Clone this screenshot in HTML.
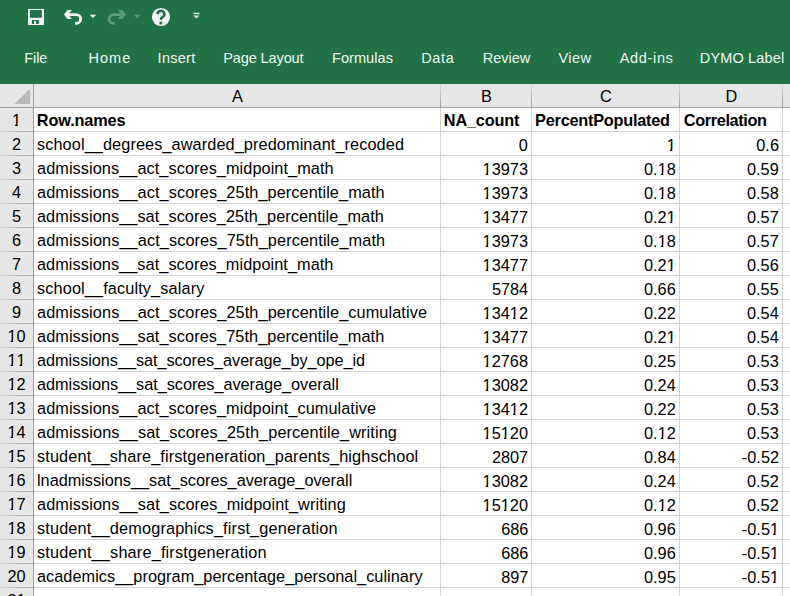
<!DOCTYPE html><html><head><meta charset="utf-8"><style>
*{margin:0;padding:0;box-sizing:border-box}
html,body{width:790px;height:596px;overflow:hidden;background:#fff}
body{position:relative;font-family:"Liberation Sans",sans-serif}
.a{position:absolute}
.t{position:absolute;white-space:nowrap;color:#000;font-size:16.3px;letter-spacing:0px;line-height:1}
.rt{transform-origin:100% 0}
.lt{transform-origin:0 0}
.o{display:inline-block;clip-path:polygon(0 0,100% 0,100% 72%,62% 72%,62% 100%,35% 100%,35% 72%,0 72%)}
.tab{position:absolute;white-space:nowrap;color:#f0f5f2;font-size:14.5px;line-height:1;transform-origin:0 0}
</style></head><body>

<div class="a" style="left:0;top:0;width:790px;height:84px;background:#217346"></div>
<svg class="a" style="left:0;top:0" width="220" height="36" viewBox="0 0 220 36">
<path d="M28 9h16v16h-16z M30 10h11.9v7.7h-11.9z M31.9 19.9h7v4h-2.8v-2.8h-2v2.8h-2.2z" fill="#f3f3f3" fill-rule="evenodd"/>
<path d="M68 14.65H76.3A4.35 4.35 0 0 1 76.3 23.35H75.1" fill="none" stroke="#f3f3f3" stroke-width="2.9"/>
<path d="M64 14.5L67.5 10H71.8L68.4 14.5L71.8 19H67.5Z" fill="#f3f3f3"/>
<path d="M89.7 14.8h6.4l-3.2 3.1z" fill="#f3f3f3"/>
<path d="M121.8 14.65H113.5A4.35 4.35 0 0 0 113.5 23.35H114.7" fill="none" stroke="#5c9d76" stroke-width="2.9"/>
<path d="M125.8 14.5L122.3 10H118L121.4 14.5L118 19H122.3Z" fill="#5c9d76"/>
<path d="M133.7 14.8h6.5l-3.25 3.1z" fill="#5c9d76"/>
<circle cx="161" cy="17" r="9.1" fill="#f3f3f3"/>
<path d="M157.6 14.2a3.4 3.2 0 1 1 5.2 2.6c-1.3.9-1.9 1.4-1.9 3" fill="none" stroke="#217346" stroke-width="2.6"/>
<rect x="159.5" y="21.6" width="2.8" height="2.8" fill="#217346"/>
<rect x="193.6" y="12.8" width="5.8" height="1.4" fill="#f3f3f3"/>
<path d="M193.5 15.4h6l-3 3.2z" fill="#f3f3f3"/>
</svg>
<div class="tab" style="left:24.2px;top:51px;letter-spacing:-0.067px">File</div>
<div class="tab" style="left:88.4px;top:51px;letter-spacing:1.067px">Home</div>
<div class="tab" style="left:157.6px;top:51px;letter-spacing:0.28px">Insert</div>
<div class="tab" style="left:223.2px;top:51px;letter-spacing:-0.1px">Page Layout</div>
<div class="tab" style="left:332.0px;top:51px;letter-spacing:0.071px">Formulas</div>
<div class="tab" style="left:421.2px;top:51px;letter-spacing:0.633px">Data</div>
<div class="tab" style="left:482.8px;top:51px;letter-spacing:-0.04px">Review</div>
<div class="tab" style="left:558.6px;top:51px;letter-spacing:0.367px">View</div>
<div class="tab" style="left:619.8px;top:51px;letter-spacing:0.65px">Add-ins</div>
<div class="tab" style="left:699.8px;top:51px;letter-spacing:0.144px">DYMO Label</div>
<div class="a" style="left:0;top:84px;width:790px;height:23px;background:#e6e6e6"></div>
<div class="a" style="left:0;top:107px;width:33px;height:489px;background:#e6e6e6"></div>
<div class="a" style="left:0;top:107px;width:790px;height:1px;background:#9f9f9f"></div>
<div class="a" style="left:33px;top:84px;width:1px;height:512px;background:#9f9f9f"></div>
<svg class="a" style="left:0;top:84px" width="33" height="23"><path d="M14.5 20h15.6v-15.4z" fill="#b9b9b9"/></svg>
<div class="a" style="left:440px;top:84px;width:1px;height:23px;background:linear-gradient(#dadada,#9f9f9f)"></div>
<div class="a" style="left:531px;top:84px;width:1px;height:23px;background:linear-gradient(#dadada,#9f9f9f)"></div>
<div class="a" style="left:679px;top:84px;width:1px;height:23px;background:linear-gradient(#dadada,#9f9f9f)"></div>
<div class="a" style="left:782px;top:84px;width:1px;height:23px;background:linear-gradient(#dadada,#9f9f9f)"></div>
<div class="a" style="left:440px;top:108px;width:1px;height:488px;background:#d4d4d4"></div>
<div class="a" style="left:531px;top:108px;width:1px;height:488px;background:#d4d4d4"></div>
<div class="a" style="left:679px;top:108px;width:1px;height:488px;background:#d4d4d4"></div>
<div class="a" style="left:782px;top:108px;width:1px;height:488px;background:#d4d4d4"></div>
<div class="a" style="left:34px;top:131px;width:756px;height:1px;background:#d4d4d4"></div>
<div class="a" style="left:0;top:131px;width:33px;height:1px;background:linear-gradient(to right,#d2d2d2,#a8a8a8)"></div>
<div class="a" style="left:34px;top:155px;width:756px;height:1px;background:#d4d4d4"></div>
<div class="a" style="left:0;top:155px;width:33px;height:1px;background:linear-gradient(to right,#d2d2d2,#a8a8a8)"></div>
<div class="a" style="left:34px;top:179px;width:756px;height:1px;background:#d4d4d4"></div>
<div class="a" style="left:0;top:179px;width:33px;height:1px;background:linear-gradient(to right,#d2d2d2,#a8a8a8)"></div>
<div class="a" style="left:34px;top:203px;width:756px;height:1px;background:#d4d4d4"></div>
<div class="a" style="left:0;top:203px;width:33px;height:1px;background:linear-gradient(to right,#d2d2d2,#a8a8a8)"></div>
<div class="a" style="left:34px;top:227px;width:756px;height:1px;background:#d4d4d4"></div>
<div class="a" style="left:0;top:227px;width:33px;height:1px;background:linear-gradient(to right,#d2d2d2,#a8a8a8)"></div>
<div class="a" style="left:34px;top:251px;width:756px;height:1px;background:#d4d4d4"></div>
<div class="a" style="left:0;top:251px;width:33px;height:1px;background:linear-gradient(to right,#d2d2d2,#a8a8a8)"></div>
<div class="a" style="left:34px;top:275px;width:756px;height:1px;background:#d4d4d4"></div>
<div class="a" style="left:0;top:275px;width:33px;height:1px;background:linear-gradient(to right,#d2d2d2,#a8a8a8)"></div>
<div class="a" style="left:34px;top:299px;width:756px;height:1px;background:#d4d4d4"></div>
<div class="a" style="left:0;top:299px;width:33px;height:1px;background:linear-gradient(to right,#d2d2d2,#a8a8a8)"></div>
<div class="a" style="left:34px;top:323px;width:756px;height:1px;background:#d4d4d4"></div>
<div class="a" style="left:0;top:323px;width:33px;height:1px;background:linear-gradient(to right,#d2d2d2,#a8a8a8)"></div>
<div class="a" style="left:34px;top:347px;width:756px;height:1px;background:#d4d4d4"></div>
<div class="a" style="left:0;top:347px;width:33px;height:1px;background:linear-gradient(to right,#d2d2d2,#a8a8a8)"></div>
<div class="a" style="left:34px;top:371px;width:756px;height:1px;background:#d4d4d4"></div>
<div class="a" style="left:0;top:371px;width:33px;height:1px;background:linear-gradient(to right,#d2d2d2,#a8a8a8)"></div>
<div class="a" style="left:34px;top:395px;width:756px;height:1px;background:#d4d4d4"></div>
<div class="a" style="left:0;top:395px;width:33px;height:1px;background:linear-gradient(to right,#d2d2d2,#a8a8a8)"></div>
<div class="a" style="left:34px;top:419px;width:756px;height:1px;background:#d4d4d4"></div>
<div class="a" style="left:0;top:419px;width:33px;height:1px;background:linear-gradient(to right,#d2d2d2,#a8a8a8)"></div>
<div class="a" style="left:34px;top:443px;width:756px;height:1px;background:#d4d4d4"></div>
<div class="a" style="left:0;top:443px;width:33px;height:1px;background:linear-gradient(to right,#d2d2d2,#a8a8a8)"></div>
<div class="a" style="left:34px;top:467px;width:756px;height:1px;background:#d4d4d4"></div>
<div class="a" style="left:0;top:467px;width:33px;height:1px;background:linear-gradient(to right,#d2d2d2,#a8a8a8)"></div>
<div class="a" style="left:34px;top:491px;width:756px;height:1px;background:#d4d4d4"></div>
<div class="a" style="left:0;top:491px;width:33px;height:1px;background:linear-gradient(to right,#d2d2d2,#a8a8a8)"></div>
<div class="a" style="left:34px;top:515px;width:756px;height:1px;background:#d4d4d4"></div>
<div class="a" style="left:0;top:515px;width:33px;height:1px;background:linear-gradient(to right,#d2d2d2,#a8a8a8)"></div>
<div class="a" style="left:34px;top:539px;width:756px;height:1px;background:#d4d4d4"></div>
<div class="a" style="left:0;top:539px;width:33px;height:1px;background:linear-gradient(to right,#d2d2d2,#a8a8a8)"></div>
<div class="a" style="left:34px;top:563px;width:756px;height:1px;background:#d4d4d4"></div>
<div class="a" style="left:0;top:563px;width:33px;height:1px;background:linear-gradient(to right,#d2d2d2,#a8a8a8)"></div>
<div class="a" style="left:34px;top:587px;width:756px;height:1px;background:#d4d4d4"></div>
<div class="a" style="left:0;top:587px;width:33px;height:1px;background:linear-gradient(to right,#d2d2d2,#a8a8a8)"></div>
<div class="t" style="left:217.5px;width:40px;text-align:center;top:88px;letter-spacing:0">A</div>
<div class="t" style="left:466.5px;width:40px;text-align:center;top:88px;letter-spacing:0">B</div>
<div class="t" style="left:586.0px;width:40px;text-align:center;top:88px;letter-spacing:0">C</div>
<div class="t" style="left:711.5px;width:40px;text-align:center;top:88px;letter-spacing:0">D</div>
<div class="t" style="left:0px;width:33px;text-align:center;top:112px;letter-spacing:0"><span class="o">1</span></div>
<div class="t" style="left:0px;width:33px;text-align:center;top:136px;letter-spacing:0">2</div>
<div class="t" style="left:0px;width:33px;text-align:center;top:160px;letter-spacing:0">3</div>
<div class="t" style="left:0px;width:33px;text-align:center;top:184px;letter-spacing:0">4</div>
<div class="t" style="left:0px;width:33px;text-align:center;top:208px;letter-spacing:0">5</div>
<div class="t" style="left:0px;width:33px;text-align:center;top:232px;letter-spacing:0">6</div>
<div class="t" style="left:0px;width:33px;text-align:center;top:256px;letter-spacing:0">7</div>
<div class="t" style="left:0px;width:33px;text-align:center;top:280px;letter-spacing:0">8</div>
<div class="t" style="left:0px;width:33px;text-align:center;top:304px;letter-spacing:0">9</div>
<div class="t" style="left:0px;width:33px;text-align:center;top:328px;letter-spacing:0"><span class="o">1</span>0</div>
<div class="t" style="left:0px;width:33px;text-align:center;top:352px;letter-spacing:0"><span class="o">1</span><span class="o">1</span></div>
<div class="t" style="left:0px;width:33px;text-align:center;top:376px;letter-spacing:0"><span class="o">1</span>2</div>
<div class="t" style="left:0px;width:33px;text-align:center;top:400px;letter-spacing:0"><span class="o">1</span>3</div>
<div class="t" style="left:0px;width:33px;text-align:center;top:424px;letter-spacing:0"><span class="o">1</span>4</div>
<div class="t" style="left:0px;width:33px;text-align:center;top:448px;letter-spacing:0"><span class="o">1</span>5</div>
<div class="t" style="left:0px;width:33px;text-align:center;top:472px;letter-spacing:0"><span class="o">1</span>6</div>
<div class="t" style="left:0px;width:33px;text-align:center;top:496px;letter-spacing:0"><span class="o">1</span>7</div>
<div class="t" style="left:0px;width:33px;text-align:center;top:520px;letter-spacing:0"><span class="o">1</span>8</div>
<div class="t" style="left:0px;width:33px;text-align:center;top:544px;letter-spacing:0"><span class="o">1</span>9</div>
<div class="t" style="left:0px;width:33px;text-align:center;top:568px;letter-spacing:0">20</div>
<div class="t" style="left:0px;width:33px;text-align:center;top:592px;letter-spacing:0">2<span class="o">1</span></div>
<div class="t lt" style="left:36.8px;top:112px;font-weight:bold;font-size:16.3px;letter-spacing:-0.137px">Row.names</div>
<div class="t lt" style="left:443.8px;top:112px;font-weight:bold;font-size:16.3px;letter-spacing:-0.171px">NA_count</div>
<div class="t lt" style="left:535.1px;top:112px;font-weight:bold;font-size:16.3px;letter-spacing:-0.233px">PercentPopulated</div>
<div class="t lt" style="left:683.8px;top:112px;font-weight:bold;font-size:16.3px;letter-spacing:-0.36px">Correlation</div>
<div class="t lt" style="left:37px;top:136px;letter-spacing:0.095px">school__degrees_awarded_predominant_recoded</div>
<div class="t rt" style="right:262px;top:137.5px;font-size:15.8px;transform:scaleX(1.0316)">0</div>
<div class="t rt" style="right:114px;top:137.5px;font-size:15.8px;transform:scaleX(1.0316)"><span class="o">1</span></div>
<div class="t rt" style="right:11px;top:137.5px;font-size:15.8px;transform:scaleX(1.0316)">0.6</div>
<div class="t lt" style="left:37px;top:160px;letter-spacing:0.071px">admissions__act_scores_midpoint_math</div>
<div class="t rt" style="right:262px;top:161.5px;font-size:15.8px;transform:scaleX(1.0316)"><span class="o">1</span>3973</div>
<div class="t rt" style="right:114px;top:161.5px;font-size:15.8px;transform:scaleX(1.0316)">0.<span class="o">1</span>8</div>
<div class="t rt" style="right:11px;top:161.5px;font-size:15.8px;transform:scaleX(1.0316)">0.59</div>
<div class="t lt" style="left:37px;top:184px;letter-spacing:0.088px">admissions__act_scores_25th_percentile_math</div>
<div class="t rt" style="right:262px;top:185.5px;font-size:15.8px;transform:scaleX(1.0316)"><span class="o">1</span>3973</div>
<div class="t rt" style="right:114px;top:185.5px;font-size:15.8px;transform:scaleX(1.0316)">0.<span class="o">1</span>8</div>
<div class="t rt" style="right:11px;top:185.5px;font-size:15.8px;transform:scaleX(1.0316)">0.58</div>
<div class="t lt" style="left:37px;top:208px;letter-spacing:0.069px">admissions__sat_scores_25th_percentile_math</div>
<div class="t rt" style="right:262px;top:209.5px;font-size:15.8px;transform:scaleX(1.0316)"><span class="o">1</span>3477</div>
<div class="t rt" style="right:114px;top:209.5px;font-size:15.8px;transform:scaleX(1.0316)">0.2<span class="o">1</span></div>
<div class="t rt" style="right:11px;top:209.5px;font-size:15.8px;transform:scaleX(1.0316)">0.57</div>
<div class="t lt" style="left:37px;top:232px;letter-spacing:0.1px">admissions__act_scores_75th_percentile_math</div>
<div class="t rt" style="right:262px;top:233.5px;font-size:15.8px;transform:scaleX(1.0316)"><span class="o">1</span>3973</div>
<div class="t rt" style="right:114px;top:233.5px;font-size:15.8px;transform:scaleX(1.0316)">0.<span class="o">1</span>8</div>
<div class="t rt" style="right:11px;top:233.5px;font-size:15.8px;transform:scaleX(1.0316)">0.57</div>
<div class="t lt" style="left:37px;top:256px;letter-spacing:0.066px">admissions__sat_scores_midpoint_math</div>
<div class="t rt" style="right:262px;top:257.5px;font-size:15.8px;transform:scaleX(1.0316)"><span class="o">1</span>3477</div>
<div class="t rt" style="right:114px;top:257.5px;font-size:15.8px;transform:scaleX(1.0316)">0.2<span class="o">1</span></div>
<div class="t rt" style="right:11px;top:257.5px;font-size:15.8px;transform:scaleX(1.0316)">0.56</div>
<div class="t lt" style="left:37px;top:280px;letter-spacing:0.124px">school__faculty_salary</div>
<div class="t rt" style="right:262px;top:281.5px;font-size:15.8px;transform:scaleX(1.0316)">5784</div>
<div class="t rt" style="right:114px;top:281.5px;font-size:15.8px;transform:scaleX(1.0316)">0.66</div>
<div class="t rt" style="right:11px;top:281.5px;font-size:15.8px;transform:scaleX(1.0316)">0.55</div>
<div class="t lt" style="left:37px;top:304px;letter-spacing:0.092px">admissions__act_scores_25th_percentile_cumulative</div>
<div class="t rt" style="right:262px;top:305.5px;font-size:15.8px;transform:scaleX(1.0316)"><span class="o">1</span>34<span class="o">1</span>2</div>
<div class="t rt" style="right:114px;top:305.5px;font-size:15.8px;transform:scaleX(1.0316)">0.22</div>
<div class="t rt" style="right:11px;top:305.5px;font-size:15.8px;transform:scaleX(1.0316)">0.54</div>
<div class="t lt" style="left:37px;top:328px;letter-spacing:0.079px">admissions__sat_scores_75th_percentile_math</div>
<div class="t rt" style="right:262px;top:329.5px;font-size:15.8px;transform:scaleX(1.0316)"><span class="o">1</span>3477</div>
<div class="t rt" style="right:114px;top:329.5px;font-size:15.8px;transform:scaleX(1.0316)">0.2<span class="o">1</span></div>
<div class="t rt" style="right:11px;top:329.5px;font-size:15.8px;transform:scaleX(1.0316)">0.54</div>
<div class="t lt" style="left:37px;top:352px;letter-spacing:-0.056px">admissions__sat_scores_average_by_ope_id</div>
<div class="t rt" style="right:262px;top:353.5px;font-size:15.8px;transform:scaleX(1.0316)"><span class="o">1</span>2768</div>
<div class="t rt" style="right:114px;top:353.5px;font-size:15.8px;transform:scaleX(1.0316)">0.25</div>
<div class="t rt" style="right:11px;top:353.5px;font-size:15.8px;transform:scaleX(1.0316)">0.53</div>
<div class="t lt" style="left:37px;top:376px;letter-spacing:-0.038px">admissions__sat_scores_average_overall</div>
<div class="t rt" style="right:262px;top:377.5px;font-size:15.8px;transform:scaleX(1.0316)"><span class="o">1</span>3082</div>
<div class="t rt" style="right:114px;top:377.5px;font-size:15.8px;transform:scaleX(1.0316)">0.24</div>
<div class="t rt" style="right:11px;top:377.5px;font-size:15.8px;transform:scaleX(1.0316)">0.53</div>
<div class="t lt" style="left:37px;top:400px;letter-spacing:0.078px">admissions__act_scores_midpoint_cumulative</div>
<div class="t rt" style="right:262px;top:401.5px;font-size:15.8px;transform:scaleX(1.0316)"><span class="o">1</span>34<span class="o">1</span>2</div>
<div class="t rt" style="right:114px;top:401.5px;font-size:15.8px;transform:scaleX(1.0316)">0.22</div>
<div class="t rt" style="right:11px;top:401.5px;font-size:15.8px;transform:scaleX(1.0316)">0.53</div>
<div class="t lt" style="left:37px;top:424px;letter-spacing:0.113px">admissions__sat_scores_25th_percentile_writing</div>
<div class="t rt" style="right:262px;top:425.5px;font-size:15.8px;transform:scaleX(1.0316)"><span class="o">1</span>5<span class="o">1</span>20</div>
<div class="t rt" style="right:114px;top:425.5px;font-size:15.8px;transform:scaleX(1.0316)">0.<span class="o">1</span>2</div>
<div class="t rt" style="right:11px;top:425.5px;font-size:15.8px;transform:scaleX(1.0316)">0.53</div>
<div class="t lt" style="left:37px;top:448px;letter-spacing:0.135px">student__share_firstgeneration_parents_highschool</div>
<div class="t rt" style="right:262px;top:449.5px;font-size:15.8px;transform:scaleX(1.0316)">2807</div>
<div class="t rt" style="right:114px;top:449.5px;font-size:15.8px;transform:scaleX(1.0316)">0.84</div>
<div class="t rt" style="right:11px;top:449.5px;font-size:15.8px;transform:scaleX(1.0316)">-0.52</div>
<div class="t lt" style="left:37px;top:472px;letter-spacing:-0.015px">lnadmissions__sat_scores_average_overall</div>
<div class="t rt" style="right:262px;top:473.5px;font-size:15.8px;transform:scaleX(1.0316)"><span class="o">1</span>3082</div>
<div class="t rt" style="right:114px;top:473.5px;font-size:15.8px;transform:scaleX(1.0316)">0.24</div>
<div class="t rt" style="right:11px;top:473.5px;font-size:15.8px;transform:scaleX(1.0316)">0.52</div>
<div class="t lt" style="left:37px;top:496px;letter-spacing:0.1px">admissions__sat_scores_midpoint_writing</div>
<div class="t rt" style="right:262px;top:497.5px;font-size:15.8px;transform:scaleX(1.0316)"><span class="o">1</span>5<span class="o">1</span>20</div>
<div class="t rt" style="right:114px;top:497.5px;font-size:15.8px;transform:scaleX(1.0316)">0.<span class="o">1</span>2</div>
<div class="t rt" style="right:11px;top:497.5px;font-size:15.8px;transform:scaleX(1.0316)">0.52</div>
<div class="t lt" style="left:37px;top:520px;letter-spacing:0.149px">student__demographics_first_generation</div>
<div class="t rt" style="right:262px;top:521.5px;font-size:15.8px;transform:scaleX(1.0316)">686</div>
<div class="t rt" style="right:114px;top:521.5px;font-size:15.8px;transform:scaleX(1.0316)">0.96</div>
<div class="t rt" style="right:11px;top:521.5px;font-size:15.8px;transform:scaleX(1.0316)">-0.5<span class="o">1</span></div>
<div class="t lt" style="left:37px;top:544px;letter-spacing:0.172px">student__share_firstgeneration</div>
<div class="t rt" style="right:262px;top:545.5px;font-size:15.8px;transform:scaleX(1.0316)">686</div>
<div class="t rt" style="right:114px;top:545.5px;font-size:15.8px;transform:scaleX(1.0316)">0.96</div>
<div class="t rt" style="right:11px;top:545.5px;font-size:15.8px;transform:scaleX(1.0316)">-0.5<span class="o">1</span></div>
<div class="t lt" style="left:37px;top:568px;letter-spacing:0.039px">academics__program_percentage_personal_culinary</div>
<div class="t rt" style="right:262px;top:569.5px;font-size:15.8px;transform:scaleX(1.0316)">897</div>
<div class="t rt" style="right:114px;top:569.5px;font-size:15.8px;transform:scaleX(1.0316)">0.95</div>
<div class="t rt" style="right:11px;top:569.5px;font-size:15.8px;transform:scaleX(1.0316)">-0.5<span class="o">1</span></div>
</body></html>
